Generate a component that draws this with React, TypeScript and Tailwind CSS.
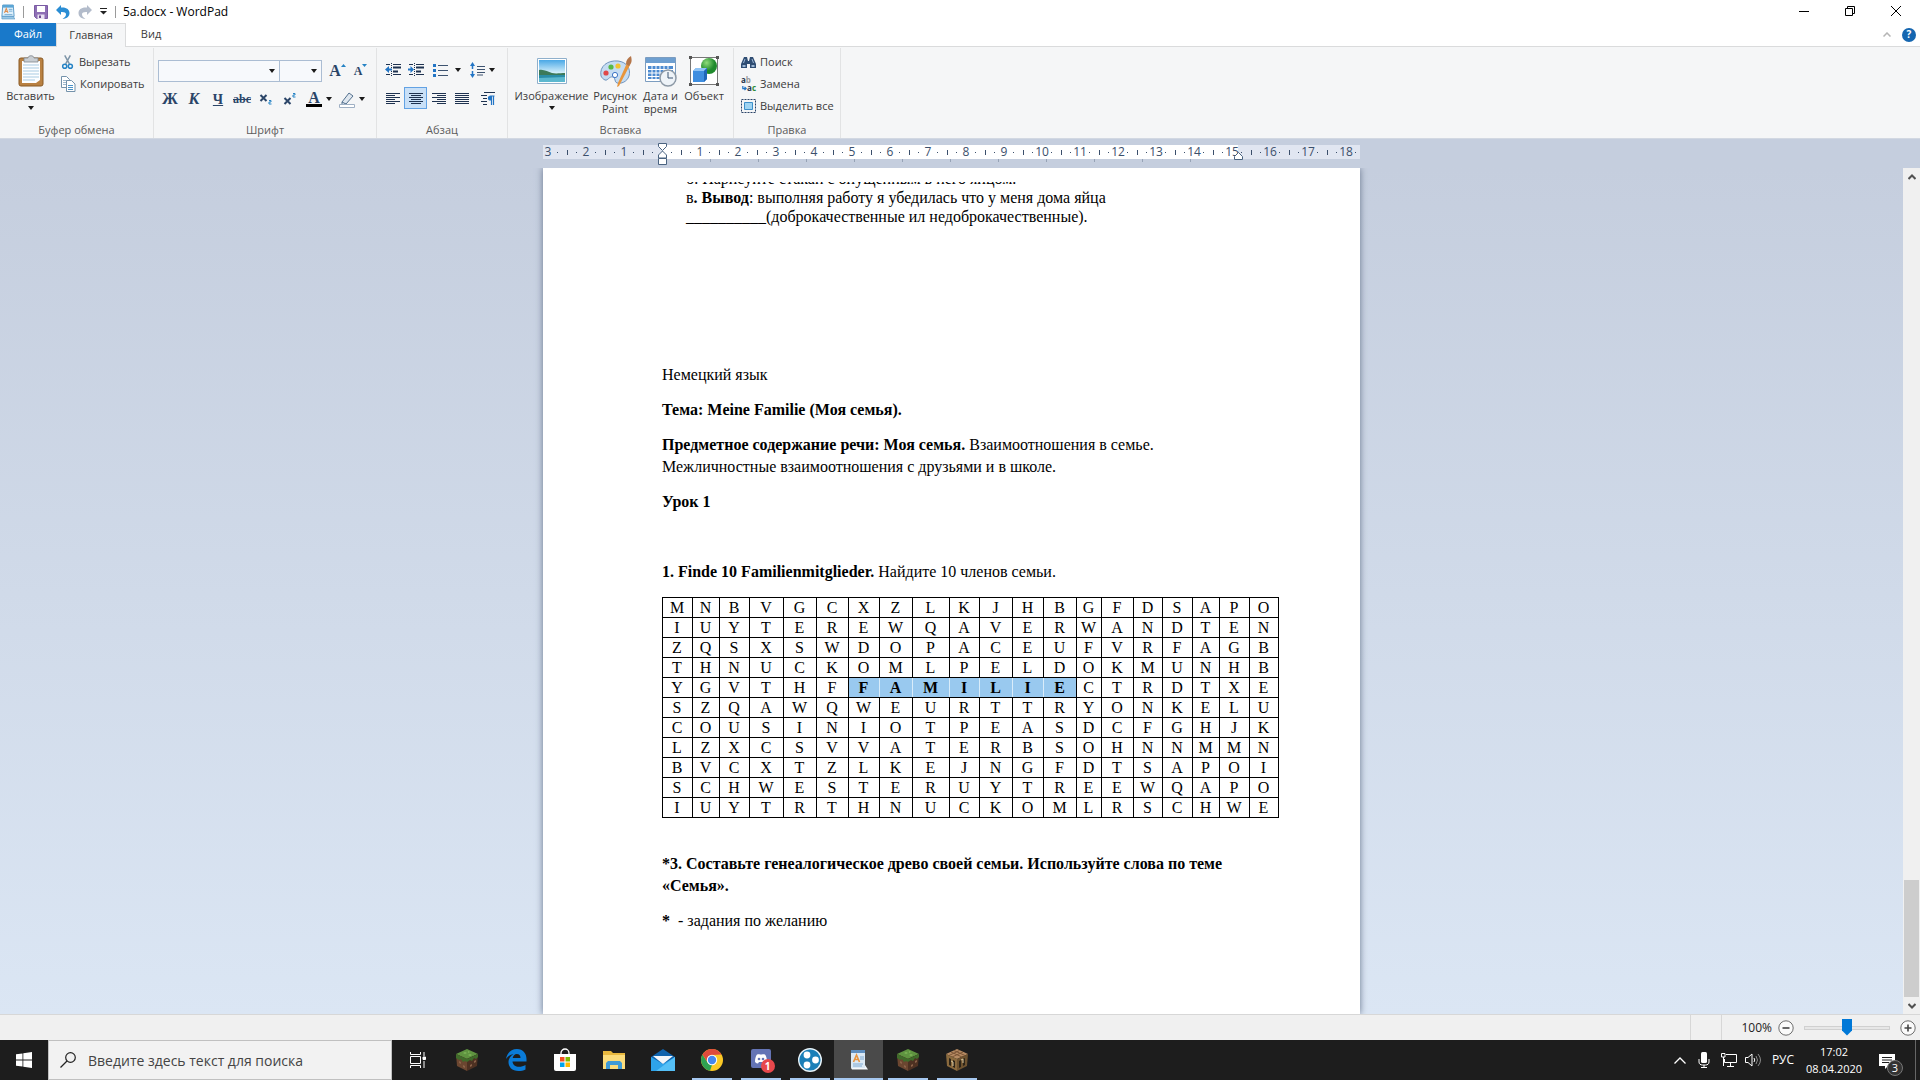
import type { ReactNode } from 'react'
import clsx from 'clsx'

const GRID = [
  'MNBVGCXZLKJHBGFDSAPO',
  'IUYTEREWQAVERWANDTEN',
  'ZQSXSWDOPACEUFVRFAGB',
  'THNUCKOMLPELDOKMUNHB',
  'YGVTHFFAMILIECTRDTXE',
  'SZQAWQWEURTTRYONKELU',
  'COUSINIOTPEASDCFGHJK',
  'LZXCSVVATERBSOHNNMMN',
  'BVCXTZLKEJNGFDTSAPOI',
  'SCHWESTERUYTREEWQAPO',
  'IUYTRTHNUCKOMLRSCHWE',
]

const COLUMNS = [30, 27, 30, 34, 33, 32, 31, 33, 37, 30, 33, 31, 33, 25, 32, 29, 30, 27, 30, 29]

const RULER = [2, 1, 0, 1, 2, 3, 4, 5, 6, 7, 8, 9, 10, 11, 12, 13, 14, 15, 16, 17, 18]

function Caret({ className }: { className?: string }) {
  return (
    <svg viewBox="0 0 6 4" className={clsx('h-1 w-1.5 shrink-0', className)} fill="#1a1a1a">
      <path d="M0 0h6L3 4z" />
    </svg>
  )
}

/* ---------- Title bar ---------- */

function WordPadIcon({ className }: { className?: string }) {
  return (
    <svg viewBox="0 0 16 18" className={className}>
      <path d="M2 1h12l1 13H1z" fill="#dff0fb" stroke="#4a90c2" />
      <path d="M2 1h12v3H2z" fill="#5aa6d6" />
      <path d="M4 10l2-5 2 5M5 8.500h2" fill="none" stroke="#e08a4a" strokeWidth="1.200" />
      <path d="M9 6h4M9 8h4M4 12h9" stroke="#6ba7d0" />
      <path d="M1 14h13l2 3H1z" fill="#9ac7e4" stroke="#4a90c2" strokeWidth=".6" />
    </svg>
  )
}

function TitleBar() {
  return (
    <header className="flex h-[23px] items-center bg-white">
      <WordPadIcon className="ml-px h-4 w-[14px]" />
      <span className="ml-2 h-3 w-px bg-[#9a9a9a]" />
      <button aria-label="Сохранить" className="ml-[10px]">
        <svg viewBox="0 0 14 14" className="size-[14px]">
          <path d="M.5.500h13v13H2.500l-2-2z" fill="#8e6fb5" stroke="#7a5aa3" />
          <path d="M3 1h8v6H3z" fill="#fff" />
          <path d="M3.500 9.500h7V14h-7z" fill="#e9e2f2" />
          <path d="M5 10.500h2V13H5z" fill="#6b4a92" />
        </svg>
      </button>
      <button aria-label="Отменить" className="ml-2">
        <svg viewBox="0 0 14 14" className="size-[14px]" fill="#2a8dd4">
          <path d="M5 0v2.500c5.500-.5 8.500 2 8.500 5.500 0 3-2 5.500-7 6 2.500-1.500 3.500-3 3.500-4.700C10 7.500 8 6.700 5 7v3L0 5z" />
        </svg>
      </button>
      <button aria-label="Вернуть" className="ml-2">
        <svg viewBox="0 0 14 14" className="size-[14px]" fill="#b3bccb">
          <path d="M9 0v2.500C3.500 2 .5 4.500.5 8c0 3 2 5.500 7 6C5 12.500 4 11 4 9.300 4 7.500 6 6.700 9 7v3l5-5z" />
        </svg>
      </button>
      <button aria-label="Настройка панели быстрого доступа" className="ml-2">
        <svg viewBox="0 0 7 7" className="size-[7px]">
          <path d="M0 .5h7" stroke="#222" />
          <path d="M0 3h7L3.500 6.500z" fill="#222" />
        </svg>
      </button>
      <span className="ml-2 h-3 w-px bg-[#9a9a9a]" />
      <h1 className="ml-[7px] text-[12px] text-black">5a.docx - WordPad</h1>
      <div className="mr-px ml-auto flex h-full">
        <button aria-label="Свернуть" className="flex w-[46px] items-center justify-center pb-[2px]">
          <svg viewBox="0 0 10 10" className="size-[10px]" stroke="#000">
            <path d="M0 5.500h10" />
          </svg>
        </button>
        <button aria-label="Восстановить" className="flex w-[46px] items-center justify-center pb-[2px]">
          <svg viewBox="0 0 10 10" className="size-[10px]" stroke="#000" fill="none">
            <path d="M.5 2.500h7v7h-7zM2.500 2.500v-2h7v7h-2" />
          </svg>
        </button>
        <button aria-label="Закрыть" className="flex w-[46px] items-center justify-center pb-[2px]">
          <svg viewBox="0 0 10 10" className="size-[10px]" stroke="#000">
            <path d="M0 0l10 10M10 0L0 10" />
          </svg>
        </button>
      </div>
    </header>
  )
}

function TabBar() {
  return (
    <nav className="flex h-6 items-stretch border-b border-[#dadbdc] bg-white text-[11px] text-[#3b3b3b]">
      <button className="w-14 bg-[#1979ca] text-white">Файл</button>
      <button className="-mb-px w-[70px] border border-b-0 border-[#dadbdc] bg-[#f5f6f7]">Главная</button>
      <button className="w-[50px]">Вид</button>
      <div className="ml-auto flex items-center gap-[11px] pr-1">
        <button aria-label="Свернуть ленту">
          <svg viewBox="0 0 8 5" className="h-[5px] w-2" fill="none" stroke="#b5b5b5" strokeWidth="1.500">
            <path d="M.5 4.500L4 1l3.500 3.500" />
          </svg>
        </button>
        <button
          aria-label="Справка"
          className="flex size-[14px] items-center justify-center rounded-full bg-[#1566b0] text-[10px] font-bold text-white"
        >
          ?
        </button>
      </div>
    </nav>
  )
}

/* ---------- Ribbon ---------- */

function Group({ label, className, children }: { label: string; className: string; children: ReactNode }) {
  return (
    <section className={clsx('flex shrink-0 flex-col border-r border-[#e2e3e4]', className)}>
      <div className="flex-1">{children}</div>
      <h2 className="text-center text-[11px] leading-4 text-[#5c5c5c]">{label}</h2>
    </section>
  )
}

type ToolButtonProps = {
  label: string
  active?: boolean
  width?: string
  className?: string
  children: ReactNode
}

function ToolButton({ label, active, width = 'w-[23px]', className, children }: ToolButtonProps) {
  return (
    <button
      aria-label={label}
      className={clsx(
        'flex h-[22px] shrink-0 items-center justify-center border text-[#2b4568]',
        active ? 'border-[#62a2e4] bg-[#c9e0f7]' : 'border-transparent',
        width,
        className,
      )}
    >
      {children}
    </button>
  )
}

function BigButton({ lines, caret, className, children }: { lines: string[]; caret?: boolean; className: string; children: ReactNode }) {
  return (
    <button className={clsx('flex flex-col items-center text-[11px] leading-[13px] text-[#3b3b3b]', className)}>
      <span className="flex h-9 items-center">{children}</span>
      {lines.map((line) => (
        <span key={line}>{line}</span>
      ))}
      {caret && <Caret className="mt-1" />}
    </button>
  )
}

function SmallButton({ label, children }: { label: string; children: ReactNode }) {
  return (
    <button className="flex h-[22px] items-center gap-1 text-[11px] text-[#3b3b3b]">
      {children}
      {label}
    </button>
  )
}

function ClipboardGroup() {
  return (
    <Group label="Буфер обмена" className="w-[154px]">
      <div className="flex pt-[3px]">
        <BigButton lines={['Вставить']} caret className="w-[61px] pt-[2px]">
          <svg viewBox="0 0 26 32" className="h-8 w-[26px]">
            <rect x="1" y="3" width="24" height="28" rx="2" fill="#b98142" stroke="#8a5a25" />
            <path d="M4 6h18v19l-4 3H4z" fill="#fdfeff" />
            <path d="M5 10h16M5 13h16M5 16h16M5 19h16M5 22h16M5 25h12" stroke="#a9cbe2" />
            <path d="M6 3h4c0-3 6-3 6 0h4v4H6z" fill="#c9ced3" stroke="#7e858c" strokeWidth=".8" />
          </svg>
        </BigButton>
        <div className="flex flex-col">
          <SmallButton label="Вырезать">
            <svg viewBox="0 0 15 16" className="h-4 w-[14px]" fill="none">
              <path d="M4 1l5 9M10 1L5 10" stroke="#7e95a8" strokeWidth="1.600" />
              <circle cx="4" cy="12.500" r="2.200" stroke="#2583c5" strokeWidth="1.600" />
              <circle cx="10" cy="12.500" r="2.200" stroke="#2583c5" strokeWidth="1.600" />
            </svg>
          </SmallButton>
          <SmallButton label="Копировать">
            <svg viewBox="0 0 15 16" className="h-4 w-[15px]" fill="#fff" stroke="#7492ab">
              <path d="M.5.500h5l3 3v8h-8z" />
              <path d="M2 4.500h4M2 6.500h4M2 8.500h3" stroke="#9fb9cd" />
              <path d="M5.500 4.500h5l3.500 3.500v7.500h-8.500z" />
              <path d="M7 9.500h5M7 11.500h5M7 13.500h5" stroke="#4b93c8" />
            </svg>
          </SmallButton>
        </div>
      </div>
    </Group>
  )
}

function Combo({ label, className }: { label: string; className: string }) {
  return (
    <div className={clsx('relative', className)}>
      <select aria-label={label} className="block h-[22px] w-full appearance-none border border-[#abbdd3] bg-[#f7f9fc]" />
      <Caret className="pointer-events-none absolute top-[9px] right-[5px]" />
    </div>
  )
}

function FontGroup() {
  return (
    <Group label="Шрифт" className="w-[223px]">
      <div className="flex items-center pt-3 pl-1">
        <Combo label="Шрифт" className="w-[122px]" />
        <Combo label="Размер шрифта" className="-ml-px w-[43px]" />
        <ToolButton label="Увеличить размер шрифта" className="ml-1">
          <span className="text-[16px] font-bold [font-family:'Liberation_Serif',serif]">A</span>
          <svg viewBox="0 0 5 3" className="mb-3 h-[3px] w-[5px]" fill="#2583c5">
            <path d="M0 3h5L2.500 0z" />
          </svg>
        </ToolButton>
        <ToolButton label="Уменьшить размер шрифта">
          <span className="text-[12px] font-bold [font-family:'Liberation_Serif',serif]">A</span>
          <svg viewBox="0 0 5 3" className="mb-3 h-[3px] w-[5px]" fill="#2583c5">
            <path d="M0 0h5L2.500 3z" />
          </svg>
        </ToolButton>
      </div>
      <div className="mt-[6px] flex items-center pl-1 [font-family:'Liberation_Serif',serif]">
        <ToolButton label="Полужирный" width="w-6">
          <b className="text-[16px]">Ж</b>
        </ToolButton>
        <ToolButton label="Курсив" width="w-6">
          <i className="text-[16px] font-bold">К</i>
        </ToolButton>
        <ToolButton label="Подчеркнутый" width="w-6">
          <u className="text-[14px] font-bold">Ч</u>
        </ToolButton>
        <ToolButton label="Зачеркнутый" width="w-6">
          <s className="text-[12px] font-bold">abc</s>
        </ToolButton>
        <ToolButton label="Подстрочный знак" width="w-6">
          <svg viewBox="0 0 14 14" className="size-[14px]" fill="none" stroke="#2b4568">
            <path d="M1.500 3l6 6M7.500 3l-6 6" strokeWidth="2" />
            <path d="M10 8.500h2v1.500h-2v2h2.500" stroke="#2583c5" />
          </svg>
        </ToolButton>
        <ToolButton label="Надстрочный знак" width="w-6">
          <svg viewBox="0 0 14 14" className="size-[14px]" fill="none" stroke="#2b4568">
            <path d="M1.500 6l6 6M7.500 6l-6 6" strokeWidth="2" />
            <path d="M10 1.500h2v1.500h-2v2h2.500" stroke="#2583c5" />
          </svg>
        </ToolButton>
        <ToolButton label="Цвет текста" width="w-6">
          <span className="flex flex-col items-center">
            <b className="text-[16px] leading-[13px]">A</b>
            <span className="h-[3px] w-4 bg-black" />
          </span>
        </ToolButton>
        <Caret />
        <ToolButton label="Цвет выделения текста" width="w-6" className="ml-[3px]">
          <svg viewBox="0 0 16 17" className="h-[17px] w-4">
            <path d="M3 11l7-9 4 3-7 8-4 1z" fill="#dfe7ef" stroke="#53718f" />
            <path d="M3 11l4 2" stroke="#53718f" />
            <path d="M.5 13.500h15v3H.5z" fill="#fff" stroke="#9fb0c4" />
          </svg>
        </ToolButton>
        <Caret />
      </div>
    </Group>
  )
}

const ALIGN = [
  { label: 'По левому краю', d: 'M0 1.500h14M0 3.500h9M0 5.500h14M0 7.500h9M0 9.500h14M0 11.500h9' },
  { label: 'По центру', d: 'M0 1.500h14M2 3.500h10M0 5.500h14M2 7.500h10M0 9.500h14M2 11.500h10' },
  { label: 'По правому краю', d: 'M0 1.500h14M5 3.500h9M0 5.500h14M5 7.500h9M0 9.500h14M5 11.500h9' },
  { label: 'По ширине', d: 'M0 1.500h14M0 3.500h14M0 5.500h14M0 7.500h14M0 9.500h14M0 11.500h14' },
]

function ParagraphGroup() {
  return (
    <Group label="Абзац" className="w-[131px]">
      <div className="flex items-center pt-[11px] pl-1">
        <ToolButton label="Уменьшить отступ">
          <svg viewBox="0 0 16 14" className="h-[14px] w-4" fill="none" stroke="#1e3250">
            <path d="M1 1.500h4M8 1.500h8M8 11.500h8M1 11.500h4" />
            <path d="M8 4.500h8M8 8.500h5" strokeWidth="2" />
            <path d="M6.500 0v14" strokeDasharray="1 1" />
            <path d="M0 6.500L4 3v2.500h3v2H4V10z" fill="#2275c5" stroke="none" />
          </svg>
        </ToolButton>
        <ToolButton label="Увеличить отступ">
          <svg viewBox="0 0 16 14" className="h-[14px] w-4" fill="none" stroke="#1e3250">
            <path d="M1 1.500h4M8 1.500h8M8 11.500h8M1 11.500h4" />
            <path d="M8 4.500h8M8 8.500h5" strokeWidth="2" />
            <path d="M6.500 0v14" strokeDasharray="1 1" />
            <path d="M6 6.500L2.500 3v2.500H0v2h2.500V10z" fill="#2275c5" stroke="none" />
          </svg>
        </ToolButton>
        <ToolButton label="Маркированный список" className="ml-[2px]">
          <svg viewBox="0 0 15 14" className="h-[14px] w-[15px]">
            <path d="M0 1h3v3H0zM0 6h3v3H0zM0 11h3v3H0z" fill="#2275c5" />
            <path d="M5 2.500h10M5 7.500h10M5 12.500h10" stroke="#3d5370" />
          </svg>
        </ToolButton>
        <Caret className="ml-[3px]" />
        <ToolButton label="Междустрочный интервал" className="ml-[5px]">
          <svg viewBox="0 0 15 16" className="h-4 w-[15px]">
            <path d="M2.500 3v10" stroke="#2275c5" strokeWidth="1.500" strokeDasharray="4 2" />
            <path d="M0 4h5L2.500 0zM0 12h5l-2.500 4z" fill="#2275c5" />
            <path d="M7 4.500h8M7 7.500h8M7 10.500h8M7 13h6" stroke="#3d5370" />
          </svg>
        </ToolButton>
        <Caret />
      </div>
      <div className="mt-[6px] flex items-center pl-1">
        {ALIGN.map((item) => (
          <ToolButton key={item.label} label={item.label} active={item.label === 'По центру'}>
            <svg viewBox="0 0 14 13" className="h-[13px] w-[14px]" stroke="#1e3250">
              <path d={item.d} />
            </svg>
          </ToolButton>
        ))}
        <ToolButton label="Абзац" className="ml-[3px]">
          <svg viewBox="0 0 14 14" className="size-[14px]" fill="none">
            <path d="M3 1.500h11M0 4.500h6M2 7.500h4M0 10.500h6M2 13.500h4" stroke="#1e3250" />
            <path d="M13.500 5h-4a2 2 0 000 4h1V5M10.500 5v9M12.500 5v9" stroke="#2275c5" strokeWidth="1.200" />
            <path d="M9.500 5h1v4h-1a2 2 0 010-4z" fill="#2275c5" />
          </svg>
        </ToolButton>
      </div>
    </Group>
  )
}

function InsertGroup() {
  return (
    <Group label="Вставка" className="w-[226px]">
      <div className="flex pt-[5px] pl-1">
        <BigButton lines={['Изображение']} caret className="w-[79px]">
          <svg viewBox="0 0 30 26" className="h-[26px] w-[30px]">
            <defs>
              <linearGradient id="sky" x2="0" y2="1">
                <stop stopColor="#4aa8e6" />
                <stop offset=".6" stopColor="#d8f1fb" />
              </linearGradient>
            </defs>
            <path d="M.5.500h29v25H.5z" fill="#fff" stroke="#8fb0cc" />
            <path d="M2 2h26v22H2z" fill="url(#sky)" />
            <path d="M2 12c5-1 9 2 13 3s9 0 13 0v4H2z" fill="#3c7a5a" />
            <path d="M2 17h26v7H2z" fill="#2a8da8" />
            <path d="M2 20l26-1v5H2z" fill="#5cb8cf" />
          </svg>
        </BigButton>
        <BigButton lines={['Рисунок', 'Paint']} className="w-[48px]">
          <svg viewBox="0 0 33 31" className="h-[31px] w-[33px]">
            <path d="M2 20C0 10 9 4 19 5c9 1 13 8 11 15-2 6-8 8-12 7-3-1-1-5-4-6-4-1-5 4-8 3-2-1-3-2-4-4z" fill="#c5dcf2" stroke="#6f93bd" />
            <circle cx="12" cy="11" r="2.600" fill="#58b947" />
            <circle cx="19" cy="10" r="2.600" fill="#f3c331" />
            <circle cx="7" cy="17" r="2.600" fill="#e0484a" />
            <circle cx="16" cy="19" r="2.600" fill="#fff" stroke="#3c74c4" />
            <path d="M28 7l3 2-11 21-2 1 1-4z" fill="#e8953b" />
            <path d="M27 8c0-4 2-6 5-8 1 4 1 7-2 10z" fill="#b5764a" />
          </svg>
        </BigButton>
        <BigButton lines={['Дата и', 'время']} className="w-[43px]">
          <svg viewBox="0 0 32 31" className="h-[31px] w-8">
            <path d="M.5 1.500h30v24H.5z" fill="#fff" stroke="#7c9dc0" />
            <path d="M1 2h29v5H1z" fill="#6e9fd0" />
            <path d="M3 10h25v13H3z" fill="#4d8bd0" />
            <path d="M3 13.500h25M3 17h25M3 20.500h25M7 10v13M11 10v13M15 10v13M19 10v13M23 10v13" stroke="#fff" />
            <circle cx="23" cy="22" r="8" fill="#eef3f8" stroke="#8d99a6" strokeWidth="1.500" />
            <path d="M23 16v6h5" fill="none" stroke="#3b5573" />
          </svg>
        </BigButton>
        <BigButton lines={['Объект']} className="w-[44px]">
          <svg viewBox="0 0 30 30" className="size-[30px]">
            <defs>
              <radialGradient id="ball" cx=".35" cy=".3">
                <stop stopColor="#8fdc7a" />
                <stop offset="1" stopColor="#1f8a2c" />
              </radialGradient>
            </defs>
            <path d="M1.500 1.500h27v27h-27z" fill="#fff" stroke="#777" />
            <circle cx="20" cy="10" r="8" fill="url(#ball)" />
            <path d="M4 15l3-3h11v11l-3 3H4z" fill="#3f8ee0" />
            <path d="M4 15l3-3h11l-3 3z" fill="#8fc3f5" />
            <path d="M15 15l3-3v11l-3 3z" fill="#1f66b8" />
            <path d="M0 0h3v3H0zM27 0h3v3h-3zM0 27h3v3H0zM27 27h3v3h-3z" fill="#555" />
          </svg>
        </BigButton>
      </div>
    </Group>
  )
}

function EditGroup() {
  return (
    <Group label="Правка" className="w-[107px]">
      <div className="flex flex-col pt-[3px] pl-[7px]">
        <SmallButton label="Поиск">
          <svg viewBox="0 0 15 13" className="h-[13px] w-[15px]">
            <path d="M3 1h3l1 4h1l1-4h3l3 7v4H9V8H6v4H0V8z" fill="#2f4d73" />
            <path d="M1.500 9h3v2h-3zM10.500 9h3v2h-3z" fill="#9db8d6" />
            <path d="M4 3L2.500 7M11 3l1.500 4" stroke="#9db8d6" />
          </svg>
        </SmallButton>
        <SmallButton label="Замена">
          <span className="flex w-[15px] flex-col text-[8px] leading-[8px] font-bold">
            <span className="text-left text-[#22344d]">
              a<span className="text-[#9a9a9a]">b</span>
            </span>
            <span className="flex items-center justify-end text-[#22344d]">
              <svg viewBox="0 0 6 6" className="size-[5px]" fill="none" stroke="#2275c5" strokeWidth="1.500">
                <path d="M1 0v3h4M3 1l2 2-2 2" />
              </svg>
              a<span className="text-[#2e8b3a]">c</span>
            </span>
          </span>
        </SmallButton>
        <SmallButton label="Выделить все">
          <svg viewBox="0 0 15 14" className="h-[14px] w-[15px]">
            <path d="M.5.500h14v13H.5z" fill="none" stroke="#2b4568" strokeDasharray="2 1" />
            <path d="M3.500 3.500h8v7h-8z" fill="#9fd4f2" stroke="#3d8fc9" />
          </svg>
        </SmallButton>
      </div>
    </Group>
  )
}

function Ribbon() {
  return (
    <div className="flex h-[92px] shrink-0 items-stretch border-b border-[#d2d8e2] bg-[#f5f6f7] pt-[1px]">
      <ClipboardGroup />
      <FontGroup />
      <ParagraphGroup />
      <InsertGroup />
      <EditGroup />
    </div>
  )
}

/* ---------- Ruler ---------- */

function Ruler() {
  return (
    <div className="flex h-[29px] shrink-0 justify-center bg-[#c5cede] pt-[6px] pr-[17px]">
      <div className="relative w-[817px]">
        <div className="flex h-[14px] items-center bg-[linear-gradient(to_right,#e1e6f1_119px,#fff_119px,#fff_695px,#e1e6f1_695px)] text-[12px] text-[#3b4f6b]">
          <div className="flex w-6 shrink-0 items-center">
            <span className="w-[10px] text-center">3</span>
            <span className="ml-1 size-px bg-[#3b4f6b]" />
          </div>
          {RULER.map((n, i) => (
            <div key={i} className="flex w-[38px] shrink-0 items-center">
              <span className="h-[5px] w-px bg-[#3b4f6b]" />
              <span className="ml-2 size-px bg-[#3b4f6b]" />
              <span className="mx-px w-4 text-center">{n || ''}</span>
              <span className="size-px bg-[#3b4f6b]" />
            </div>
          ))}
        </div>
        <div className="flex pl-[167px]">
          {Array.from({ length: 11 }, (_, i) => (
            <span key={i} className="h-[3px] w-12 border-l border-[#97a3b6]" />
          ))}
        </div>
        {/* indent markers */}
        <svg viewBox="0 0 9 23" className="absolute -top-[2px] left-[115px] h-[23px] w-[9px]" fill="#fff" stroke="#4a6380">
          <path d="M.5.500h8v3l-4 4-4-4zM4.500 8l4 4v3h-8v-3zM.5 15.500h8v6h-8z" />
        </svg>
        <svg viewBox="0 0 9 8" className="absolute top-[7px] left-[691px] h-2 w-[9px]" fill="#fff" stroke="#4a6380">
          <path d="M4.500.500l4 4v3h-8v-3z" />
        </svg>
      </div>
    </div>
  )
}

/* ---------- Document ---------- */

function WordSearch() {
  return (
    <table className="mt-px w-[617px] table-fixed border-collapse text-center leading-[19px]">
      <colgroup>
        {COLUMNS.map((w, i) => (
          <col key={i} style={{ width: w }} />
        ))}
      </colgroup>
      <tbody>
        {GRID.map((row, r) => (
          <tr key={r}>
            {row.split('').map((letter, c) => {
              const found = r === 4 && c > 5 && c < 13
              return (
                <td
                  key={c}
                  className={clsx(
                    'h-5 border border-black p-0 pr-px',
                    found && 'bg-[#99c9ef] font-bold',
                    found && c < 12 && 'border-r-[#d9ecfa]',
                    found && c > 6 && 'border-l-[#d9ecfa]',
                  )}
                >
                  {letter}
                </td>
              )
            })}
          </tr>
        ))}
      </tbody>
    </table>
  )
}

function Page() {
  return (
    <article className="w-[817px] overflow-hidden bg-white pt-[14px] text-[16px] leading-[22px] text-black shadow-[0_0_7px_#66748c] [font-family:'Liberation_Serif',serif]">
      <div className="h-full overflow-hidden pr-20 pl-[119px]">
        {/* the first line is scrolled half out of view */}
        <div className="-mt-[13px] pl-6 leading-[19px]">
          <p>б. Нарисуйте стакан с опущенным в него яйцом.</p>
          <p>
            в<b>. Вывод</b>: выполняя работу я убедилась что у меня дома яйца
          </p>
          <p>__________(доброкачественные ил недоброкачественные).</p>
        </div>
        <div className="mt-[138px] flex flex-col gap-[13px]">
          <p>Немецкий язык</p>
          <p>
            <b>Тема: Meine Familie (Моя семья).</b>
          </p>
          <p>
            <b>Предметное содержание речи: Моя семья.</b> Взаимоотношения в семье.
            <br />
            Межличностные взаимоотношения с друзьями и в школе.
          </p>
          <p>
            <b>Урок 1</b>
          </p>
          <p>&nbsp;</p>
          <p>
            <b>1. Finde 10 Familienmitglieder.</b> Найдите 10 членов семьи.
          </p>
          <WordSearch />
        </div>
        <div className="mt-[35px] flex flex-col gap-[13px]">
          <p>
            <b>
              *3. Составьте генеалогическое древо своей семьи. Используйте слова по теме
              <br />
              «Семья».
            </b>
          </p>
          <p>
            <b>*</b>&nbsp; - задания по желанию
          </p>
        </div>
      </div>
    </article>
  )
}

function ScrollBar() {
  return (
    <div className="flex w-[17px] shrink-0 flex-col bg-[#f0f0f0]">
      <button aria-label="Вверх" className="flex h-[18px] items-center justify-center">
        <svg viewBox="0 0 8 6" className="h-[6px] w-2" fill="none" stroke="#505050" strokeWidth="2">
          <path d="M.5 5L4 1.500 7.500 5" />
        </svg>
      </button>
      <div className="flex flex-1 flex-col justify-end">
        <div className="mx-px h-[117px] bg-[#cdcdcd]" />
      </div>
      <button aria-label="Вниз" className="flex h-[17px] items-center justify-center">
        <svg viewBox="0 0 8 6" className="h-[6px] w-2" fill="none" stroke="#505050" strokeWidth="2">
          <path d="M.5 1L4 4.500 7.500 1" />
        </svg>
      </button>
    </div>
  )
}

function ZoomButton({ label, d }: { label: string; d: string }) {
  return (
    <button aria-label={label}>
      <svg viewBox="0 0 16 16" className="size-4" fill="#fafafa" stroke="#6e6e6e">
        <circle cx="8" cy="8" r="7.200" />
        <path d={d} stroke="#444" strokeWidth="1.600" />
      </svg>
    </button>
  )
}

function StatusBar() {
  return (
    <footer className="flex h-[26px] shrink-0 items-center justify-end border-t border-[#d7d7d7] bg-[#f0f0f0] pr-1 text-[12px] text-[#222]">
      <span className="h-full w-8 border-x border-[#d7d7d7]" />
      <label htmlFor="zoom" className="mr-[6px] w-[50px] text-right">
        100%
      </label>
      <ZoomButton label="Уменьшить" d="M4.500 8h7" />
      <input
        id="zoom"
        type="range"
        min={0}
        max={100}
        defaultValue={50}
        className="mx-[10px] h-[18px] w-[86px] appearance-none bg-transparent [&::-webkit-slider-runnable-track]:h-1 [&::-webkit-slider-runnable-track]:border [&::-webkit-slider-runnable-track]:border-[#d0d0d0] [&::-webkit-slider-runnable-track]:bg-[#e7e7e7] [&::-webkit-slider-thumb]:-mt-2 [&::-webkit-slider-thumb]:h-[17px] [&::-webkit-slider-thumb]:w-[10px] [&::-webkit-slider-thumb]:appearance-none [&::-webkit-slider-thumb]:bg-[#0078d7] [&::-webkit-slider-thumb]:[clip-path:polygon(0_0,100%_0,100%_70%,50%_100%,0_70%)]"
      />
      <ZoomButton label="Увеличить" d="M4.500 8h7M8 4.500v7" />
    </footer>
  )
}

/* ---------- Taskbar ---------- */

function TaskButton({ label, running, active, children }: { label: string; running?: boolean; active?: boolean; children: ReactNode }) {
  return (
    <button
      aria-label={label}
      className={clsx('flex h-full w-[49px] flex-col items-center justify-end', active && 'bg-[#4a4a4a]')}
    >
      <span className="flex flex-1 items-center pt-[2px]">{children}</span>
      <span className={clsx('h-[2px]', active ? 'w-full' : 'w-10', (running || active) && 'bg-[#a6c8f0]')} />
    </button>
  )
}

function GrassBlock() {
  return (
    <svg viewBox="0 0 24 24" className="size-6">
      <path d="M12 1l11 5-11 5L1 6z" fill="#5f9440" />
      <path d="M1 6l11 5v12L2 18z" fill="#6b4630" />
      <path d="M23 6l-11 5v12l10-5z" fill="#4d3122" />
      <path d="M1 6l11 5v3l-2-1-2 1-2-3-2 1-3-2zM23 6l-11 5v3l3-2 2 1 2-3 2 1 2-2z" fill="#3f6b2a" />
      <path d="M4 13l2 1v2l-2-1zM8 17l2 1v2l-2-1zM15 17l2-1v2l-2 1zM19 13l2-1v2l-2 1z" fill="#8a6248" />
      <path d="M8 5l2-1 2 1-2 1zM13 7l2-1 2 1-2 1zM13 3l2 1-2 1z" fill="#7db457" />
    </svg>
  )
}

function CraftingTable() {
  return (
    <svg viewBox="0 0 24 24" className="size-6">
      <path d="M12 1l11 5-11 5L1 6z" fill="#b58a62" />
      <path d="M1 6l11 5v12L2 18z" fill="#8a6a3e" />
      <path d="M23 6l-11 5v12l10-5z" fill="#6e5330" />
      <path d="M6 4l11 5M9 2.500L20 7.500M18 4L7 9M14.500 2.500L4 7.500" stroke="#7d5637" />
      <path d="M4 10l2 1v7l-2-1zM8 12l2 1v7l-2-1zM14 13l2-1v7l-2 1zM18 11l2-1v7l-2 1z" fill="#2c2418" />
      <path d="M6 13l2 1v4M16 12l2-1v4" stroke="#d8c8a0" fill="none" />
    </svg>
  )
}

function TaskApps() {
  return (
    <div className="ml-px flex">
      <TaskButton label="Представление задач">
        <svg viewBox="0 0 16 16" className="size-4" fill="none" stroke="#fff">
          <path d="M.5 4.500h10v7H.5zM.5 0v2.500h10V0M.5 16v-2.500h10V16M14 0v4M14 9v7" />
          <path d="M13 5h2.500v2.500H13z" fill="#fff" />
        </svg>
      </TaskButton>
      <TaskButton label="Minecraft">
        <GrassBlock />
      </TaskButton>
      <TaskButton label="Microsoft Edge">
        <svg viewBox="0 0 22 22" className="size-[22px]" fill="#0a7bd8">
          <path d="M1 10C2 4 6 0 12 0c6 0 9.500 4.500 9.500 10v2.500H7.500c.3 3.500 3 5.300 6.500 5.300 2.500 0 4.500-.7 6.500-1.800v4.500c-2 1-4.500 1.500-7 1.500C7 22 3.500 18 3.500 13c0-3.500 2-6.300 5-7.800C5 5.500 2.500 7.500 1 10zm6.700-1h7.800c0-2.500-1.300-4-3.700-4-2.200 0-3.700 1.700-4.100 4z" />
        </svg>
      </TaskButton>
      <TaskButton label="Microsoft Store">
        <svg viewBox="0 0 22 24" className="h-6 w-[22px]">
          <path d="M7 7V5a4 4 0 018 0v2" fill="none" stroke="#fff" strokeWidth="1.300" />
          <path d="M0 6h22v15a2 2 0 01-2 2H2a2 2 0 01-2-2z" fill="#fff" />
          <path d="M6 9h4.500v4.500H6z" fill="#f25022" />
          <path d="M11.500 9H16v4.500h-4.500z" fill="#7fba00" />
          <path d="M6 14.500h4.500V19H6z" fill="#00a4ef" />
          <path d="M11.500 14.500H16V19h-4.500z" fill="#ffb900" />
        </svg>
      </TaskButton>
      <TaskButton label="Проводник">
        <svg viewBox="0 0 22 18" className="h-[18px] w-[22px]">
          <path d="M0 0h8l2 2h12v16H0z" fill="#e8b83e" />
          <path d="M0 4h22v14H0z" fill="#fbdc7b" />
          <path d="M3 18v-6l2-2h12l2 2v6h-4v-4H7v4z" fill="#3f9bd6" />
        </svg>
      </TaskButton>
      <TaskButton label="Почта">
        <svg viewBox="0 0 24 22" className="h-[22px] w-6">
          <path d="M0 8l12-8 12 8v14H0z" fill="#0f63ad" />
          <path d="M0 8l12 7L24 8v14H0z" fill="#2ea3ea" />
          <path d="M24 8v14H5z" fill="#55c0f7" />
          <path d="M2 7h20l-10 8z" fill="#f2f6fa" />
        </svg>
      </TaskButton>
      <TaskButton label="Google Chrome" running>
        <svg viewBox="0 0 22 22" className="size-[22px]">
          <circle cx="11" cy="11" r="11" fill="#fbc926" />
          <path d="M1.500 5.500L7 14l4 2-2 5.800A11 11 0 011.500 5.500z" fill="#2ea152" />
          <path d="M1.500 5.500A11 11 0 0120.500 5.500L11 6l-4.500 7z" fill="#de4a3c" />
          <circle cx="11" cy="11" r="5.200" fill="#fff" />
          <circle cx="11" cy="11" r="4.200" fill="#4687ee" />
        </svg>
      </TaskButton>
      <TaskButton label="Discord" running>
        <span className="relative">
          <svg viewBox="0 0 20 22" className="h-[22px] w-5">
            <path d="M2 0h16a2 2 0 012 2v20l-4-3H2a2 2 0 01-2-2V2a2 2 0 012-2z" fill="#6474b5" />
            <path d="M4 13c0-3 .5-5.500 2-7.500C7.500 5 8.500 5 9 5.500h2c.5-.500 1.500-.500 3 0 1.500 2 2 4.500 2 7.500-1 1-2 1.500-3 1.500l-1-1.500H8l-1 1.500C6 14.500 5 14 4 13z" fill="#fff" />
            <circle cx="8" cy="10" r="1.300" fill="#6474b5" />
            <circle cx="12" cy="10" r="1.300" fill="#6474b5" />
          </svg>
          <span className="absolute -right-[4px] -bottom-[2px] flex size-[14px] items-center justify-center rounded-full bg-[#e8484c] text-[10px] font-bold">
            1
          </span>
        </span>
      </TaskButton>
      <TaskButton label="Hamachi" running>
        <svg viewBox="0 0 24 24" className="size-6">
          <circle cx="12" cy="12" r="11.300" fill="#1a7fb8" stroke="#e9f4fa" strokeWidth="1.400" />
          <circle cx="9" cy="7" r="3.400" fill="#fff" />
          <circle cx="17.500" cy="12" r="3.400" fill="#fff" />
          <circle cx="9" cy="17" r="3.400" fill="#fff" />
        </svg>
      </TaskButton>
      <TaskButton label="WordPad" active>
        <svg viewBox="0 0 18 20" className="h-5 w-[18px]">
          <path d="M1 0h14v18H1z" fill="#dbe9f5" />
          <path d="M1 0h14v3H1z" fill="#5f8fc0" />
          <path d="M3.500 12L6.500 5l3 7M4.500 9.500h4" fill="none" stroke="#e8943f" strokeWidth="1.600" />
          <path d="M10 7h4M10 9h4M3 14h10M3 16h9" stroke="#7fa9d2" />
          <path d="M1 18h14V15l3 4.500H2z" fill="#f4f8fc" />
        </svg>
      </TaskButton>
      <TaskButton label="Minecraft" running>
        <GrassBlock />
      </TaskButton>
      <TaskButton label="Minecraft Launcher" running>
        <CraftingTable />
      </TaskButton>
    </div>
  )
}

function Tray() {
  return (
    <div className="ml-auto flex items-center">
      <button aria-label="Скрытые значки" className="flex w-6 justify-center">
        <svg viewBox="0 0 12 7" className="h-[7px] w-3" fill="none" stroke="#fff" strokeWidth="1.300">
          <path d="M.5 6.500L6 1l5.500 5.500" />
        </svg>
      </button>
      <button aria-label="Микрофон" className="flex w-6 justify-center">
        <svg viewBox="0 0 12 16" className="h-4 w-3" fill="#fff">
          <rect x="3" y="0" width="6" height="11" rx="1.500" />
          <path d="M1 7v3c0 2 1.500 3 3.500 3h3c2 0 3.500-1 3.500-3V7" fill="none" stroke="#fff" />
          <path d="M5.500 13h1v2H9v1H3v-1h2.500z" />
        </svg>
      </button>
      <button aria-label="Сеть" className="flex w-[25px] justify-center">
        <svg viewBox="0 0 16 14" className="h-[14px] w-4" fill="none" stroke="#fff">
          <path d="M5 1.500h10.500v8H3.500V6M9.500 10v3M6 13.500h7" />
          <path d="M.5.500h3.500v3.500H.5zM2.500 4v9" />
        </svg>
      </button>
      <button aria-label="Громкость" className="flex w-6 justify-center">
        <svg viewBox="0 0 16 14" className="h-[14px] w-4" fill="none" stroke="#fff">
          <path d="M.5 4.500h2.500l4-3.500v12L3 9.500H.5z" />
          <path d="M9 5q1.500 2 0 4" />
          <path d="M11 3q3 4 0 8M13 1q5 6 0 12" stroke="#8a8a8a" />
        </svg>
      </button>
      <button className="w-9 text-[12px]">РУС</button>
      <button className="flex w-[66px] flex-col items-center text-[11px] leading-[17px]">
        <span>17:02</span>
        <span>08.04.2020</span>
      </button>
      <button aria-label="Уведомления" className="relative mr-3 ml-3 h-6 w-6">
        <svg viewBox="0 0 16 16" className="mt-1 size-4" fill="#fff">
          <path d="M0 0h16v12H9l-3 3v-3H0z" />
          <path d="M3 3.500h10M3 6h10M3 8.500h7" stroke="#1d1d1d" />
        </svg>
        <span className="absolute right-0 -bottom-1 flex size-4 items-center justify-center rounded-full border border-[#777] bg-[#333] text-[11px]">
          3
        </span>
      </button>
      <span className="mr-1 h-10 w-px bg-[#666]" />
    </div>
  )
}

function Taskbar() {
  return (
    <div className="flex h-10 shrink-0 items-stretch bg-[#1d1d1d] text-white">
      <button aria-label="Пуск" className="flex w-12 items-center justify-center">
        <svg viewBox="0 0 16 16" className="size-4" fill="#fff">
          <path d="M0 2.300L6.500 1.400v6.200H0zM7.300 1.300L16 0v7.600H7.300zM0 8.400h6.500v6.200L0 13.700zM7.300 8.400H16V16l-8.700-1.300z" />
        </svg>
      </button>
      <label className="flex w-[344px] items-center border border-[#c0c0c0] bg-[#f2f2f2] pl-[11px]">
        <svg viewBox="0 0 16 16" className="size-4 shrink-0" fill="none" stroke="#222" strokeWidth="1.200">
          <circle cx="10.500" cy="5.500" r="4.800" />
          <path d="M7 9L.5 15.500" />
        </svg>
        <input
          type="text"
          aria-label="Поиск"
          placeholder="Введите здесь текст для поиска"
          className="ml-3 w-full bg-transparent text-[14px] outline-none placeholder:text-[#444]"
        />
      </label>
      <TaskApps />
      <Tray />
    </div>
  )
}

export default function App() {
  return (
    <div className="flex h-screen flex-col overflow-hidden [font-family:'Open_Sans','Noto_Sans',sans-serif]">
      <TitleBar />
      <TabBar />
      <Ribbon />
      <Ruler />
      <main className="flex min-h-0 flex-1 bg-linear-to-b from-[#c5cede] to-[#dbe6f4]">
        <div className="flex flex-1 justify-center overflow-hidden">
          <Page />
        </div>
        <ScrollBar />
      </main>
      <StatusBar />
      <Taskbar />
    </div>
  )
}
